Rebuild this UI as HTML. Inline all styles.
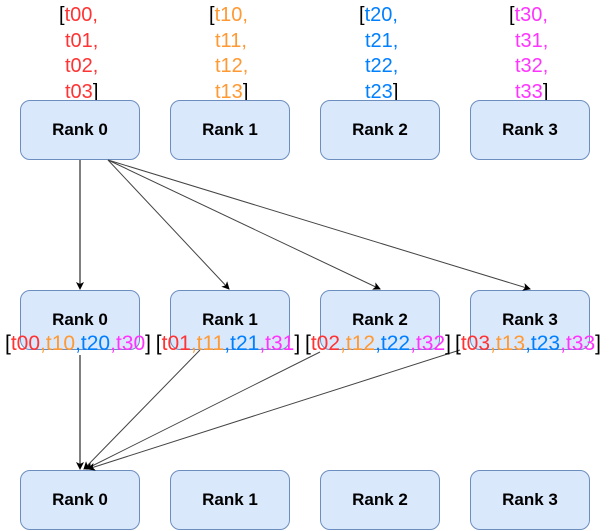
<!DOCTYPE html>
<html><head><style>
body{margin:0;width:610px;height:531px;background:#fff;position:relative;font-family:"Liberation Sans",sans-serif;overflow:hidden}
.b{position:absolute;width:118px;height:58px;background:#dae8fc;border:1px solid #6c8ebf;border-radius:10px;display:flex;align-items:center;justify-content:center;font-weight:bold;font-size:17px;color:#000}
.t{position:absolute;font-size:20px;line-height:25.5px;color:#000;white-space:pre}
.t span{display:inline-block}
.i{padding-left:6px}
.r{color:#ff3333}.o{color:#ff9933}.u{color:#007fff}.m{color:#ff33ff}
.mid{position:absolute;top:332px;font-size:21px;line-height:24px;white-space:nowrap;width:150px;text-align:center;display:flex;justify-content:center}
svg{position:absolute;left:0;top:0}
</style></head><body>
<div class="t" style="left:59px;top:3px">[<span class="r">t00,</span><br><span class="r i">t01,</span><br><span class="r i">t02,</span><br><span class="r i">t03</span>]</div>
<div class="t" style="left:209px;top:3px">[<span class="o">t10,</span><br><span class="o i">t11,</span><br><span class="o i">t12,</span><br><span class="o i">t13</span>]</div>
<div class="t" style="left:359px;top:3px">[<span class="u">t20,</span><br><span class="u i">t21,</span><br><span class="u i">t22,</span><br><span class="u i">t23</span>]</div>
<div class="t" style="left:509px;top:3px">[<span class="m">t30,</span><br><span class="m i">t31,</span><br><span class="m i">t32,</span><br><span class="m i">t33</span>]</div>

<div class="b" style="left:20px;top:100px">Rank 0</div>
<div class="b" style="left:170px;top:100px">Rank 1</div>
<div class="b" style="left:320px;top:100px">Rank 2</div>
<div class="b" style="left:470px;top:100px">Rank 3</div>
<div class="b" style="left:20px;top:290px">Rank 0</div>
<div class="b" style="left:170px;top:290px">Rank 1</div>
<div class="b" style="left:320px;top:290px">Rank 2</div>
<div class="b" style="left:470px;top:290px">Rank 3</div>
<div class="b" style="left:20px;top:470px">Rank 0</div>
<div class="b" style="left:170px;top:470px">Rank 1</div>
<div class="b" style="left:320px;top:470px">Rank 2</div>
<div class="b" style="left:470px;top:470px">Rank 3</div>

<svg width="610" height="531">
<defs><marker id="a" markerWidth="8" markerHeight="8" refX="7" refY="4" orient="auto" markerUnits="userSpaceOnUse"><path d="M0,0 L8,4 L0,8 L2,4z" fill="#000"/></marker></defs>
<g stroke="#000" stroke-width="1" fill="none">
<line x1="80" y1="160" x2="80" y2="289" marker-end="url(#a)"/>
<line x1="108" y1="160" x2="229" y2="289" stroke="#444" marker-end="url(#a)"/>
<line x1="108" y1="160" x2="380" y2="289" stroke="#444" marker-end="url(#a)"/>
<line x1="108" y1="160" x2="530" y2="289" stroke="#444" marker-end="url(#a)"/>
<line x1="80" y1="355" x2="80" y2="469" marker-end="url(#a)"/>
<line x1="200" y1="350" x2="84" y2="469" stroke="#444" marker-end="url(#a)"/>
<line x1="320" y1="352" x2="86" y2="469" stroke="#444" marker-end="url(#a)"/>
<line x1="460" y1="350" x2="88" y2="469" stroke="#444" marker-end="url(#a)"/>
</g></svg>

<div class="mid" style="left:3px">[<span class="r">t00</span><span class="o">,t10</span><span class="u">,t20</span><span class="m">,t30</span>]</div>
<div class="mid" style="left:153px">[<span class="r">t01</span><span class="o">,t11</span><span class="u">,t21</span><span class="m">,t31</span>]</div>
<div class="mid" style="left:303px">[<span class="r">t02</span><span class="o">,t12</span><span class="u">,t22</span><span class="m">,t32</span>]</div>
<div class="mid" style="left:453px">[<span class="r">t03</span><span class="o">,t13</span><span class="u">,t23</span><span class="m">,t33</span>]</div>
</body></html>
